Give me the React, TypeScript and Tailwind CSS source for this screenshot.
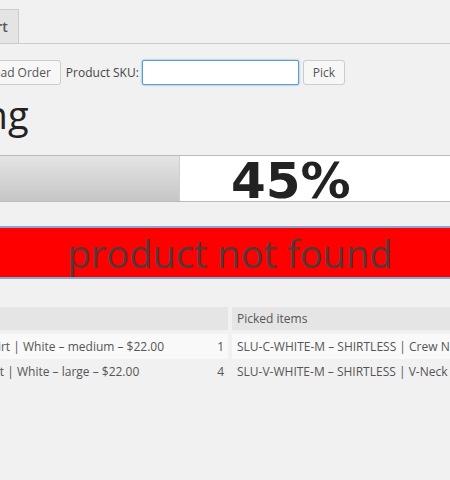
import React from "react";

const rows = [
  { name: "Shirt | White – medium – $22.00", pad: 184, qty: 1, sku: "SLU-C-WHITE-M – SHIRTLESS | Crew Neck T-Shirt" },
  { name: "Shirt | White – large – $22.00", pad: 178, qty: 4, sku: "SLU-V-WHITE-M – SHIRTLESS | V-Neck T-Shirt" },
];

const App = () => {
  const progress = 45;

  return (
    <div
      className="w-[450px] h-[480px] overflow-hidden bg-[#f1f1f1] text-[#444]"
      style={{ fontFamily: '"Open Sans", "Noto Sans", sans-serif' }}
    >
      {/* tabs */}
      <div className="pt-[9px] border-b border-[#cccccc] flex">
        <div className="ml-[-49px] h-[34px] px-[10px] flex items-center bg-[#e4e4e4] border border-b-0 border-[#cccccc] text-[14px] font-semibold text-[#555]">
          Report
        </div>
      </div>

      {/* controls */}
      <div className="mt-[16px] flex items-center h-[25px] ml-[-23px]">
        <button className="h-[25px] px-[9px] bg-[#f7f7f7] border border-[#cccccc] rounded-[3px] text-[12px] text-[#555] leading-none">
          Load Order
        </button>
        <span className="ml-[5px] text-[12px] text-[#444]">Product SKU:</span>
        <input className="ml-[3px] w-[157px] h-[25px] bg-white border border-[#5b9dd9] rounded-[2px] shadow-[0_0_2px_rgba(30,140,190,0.8)] outline-none" />
        <button className="ml-[4px] w-[42px] h-[25px] bg-[#f7f7f7] border border-[#cccccc] rounded-[3px] text-[12px] text-[#555] leading-none">
          Pick
        </button>
      </div>

      {/* heading */}
      <h1 className="mt-[6px] ml-[-162px] text-[38px] leading-[46px] text-[#222] font-normal">Processing</h1>

      {/* progress */}
      <div className="mt-[18px] ml-[-220px] w-[900px] h-[47px] flex border-y border-[#bbbbbb] bg-white">
        <div className="w-[400px] h-full bg-gradient-to-b from-[#e4e4e4] to-[#c6c6c6] border-r border-[#cfcfcf]" />
        <div className="flex-1 relative">
          <span
            className="absolute left-[51px] top-[2px] text-[50px] leading-[46px] font-bold text-[#222]"
            style={{ fontFamily: '"DejaVu Sans", Verdana, sans-serif' }}
          >
            {progress}%
          </span>
        </div>
      </div>

      {/* status */}
      <div className="mt-[24px] h-[53px] bg-[#ff0000] border-y-2 border-[#8aa6d6] flex items-center justify-center pl-[10px] text-[38px] text-[#553838] leading-none">
        product not found
      </div>

      {/* table */}
      <div className="mt-[28px] ml-[-200px] grid grid-cols-[428px_1fr] gap-x-[4px] text-[12px] text-[#555]">
        <div className="h-[23px] bg-[#e5e5e5] px-[5px] flex items-center">Ordered items</div>
        <div className="h-[23px] bg-[#e5e5e5] px-[5px] flex items-center whitespace-nowrap">Picked items</div>
        <div className="col-span-2 h-[4px]" />
        {rows.map((r, i) => (
          <React.Fragment key={i}>
            <div className={`h-[25px] pr-[4px] flex items-center justify-between whitespace-nowrap ${i === 0 ? "bg-[#f9f9f9]" : ""}`}>
              <span style={{ paddingLeft: r.pad }}>{r.name}</span>
              <span>{r.qty}</span>
            </div>
            <div className={`h-[25px] px-[5px] flex items-center whitespace-nowrap ${i === 0 ? "bg-[#f9f9f9]" : ""}`}>
              {r.sku}
            </div>
          </React.Fragment>
        ))}
      </div>
    </div>
  );
};

export default App;
